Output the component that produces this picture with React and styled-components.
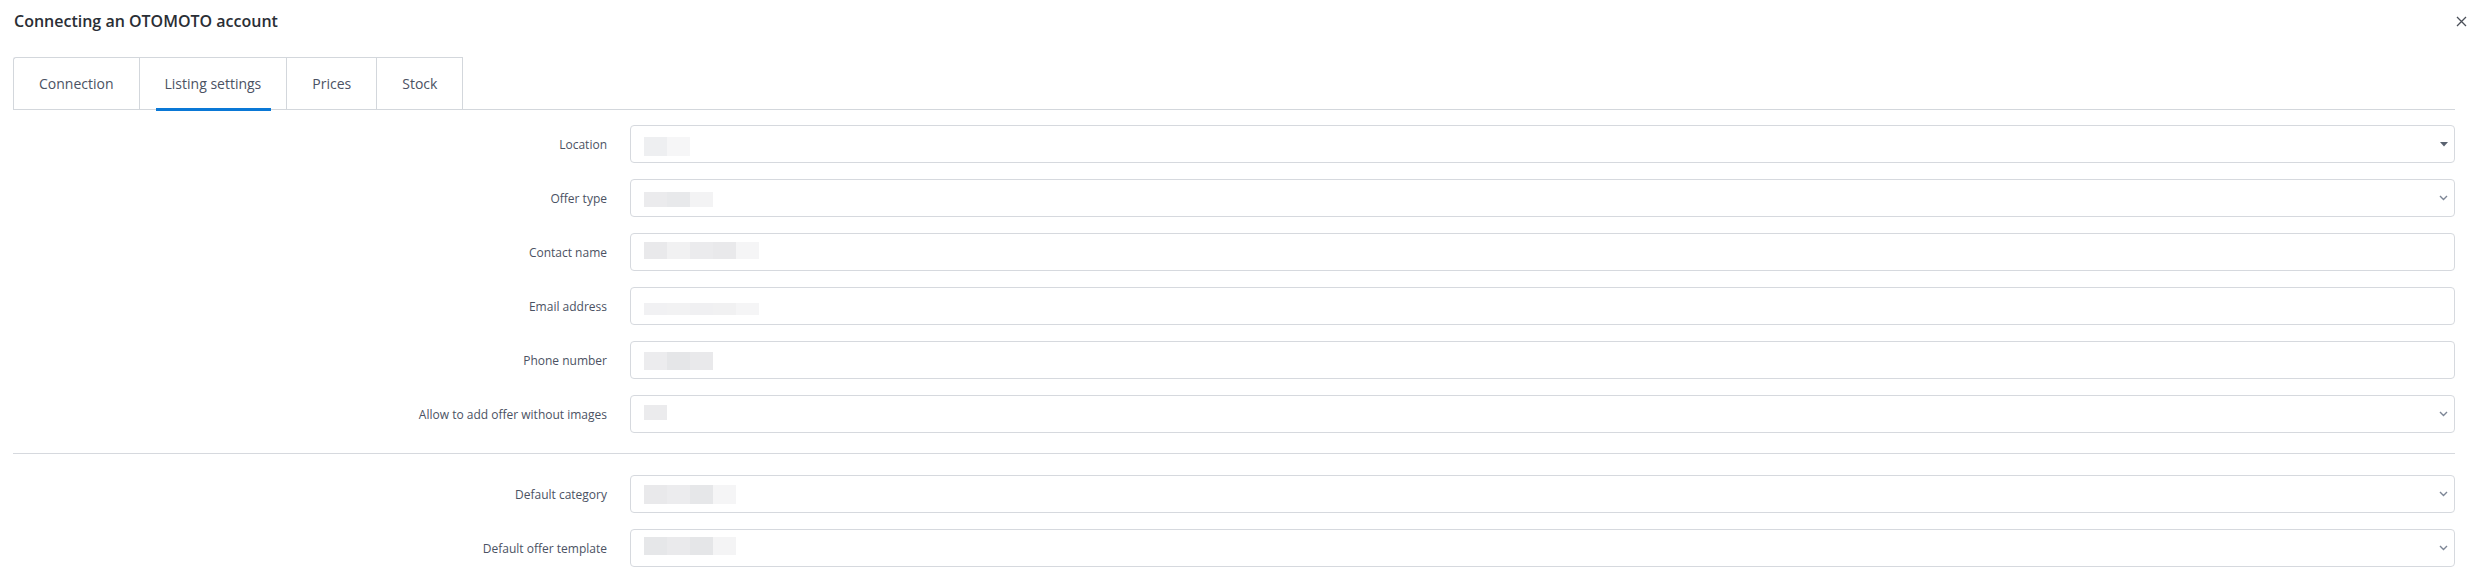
import React from 'react';
import styled, { createGlobalStyle } from 'styled-components';

const GlobalStyle = createGlobalStyle`
	body {
		margin: 0;
		background: #ffffff;
		font-family: 'Open Sans', 'Noto Sans', sans-serif;
	}
`;

const Page = styled.div`
	padding: 0 23px 0 13px;
`;

const Header = styled.div`
	display: flex;
	align-items: center;
	justify-content: space-between;
	height: 42px;
	margin-right: -13px;
	padding-left: 1px;
`;

const Title = styled.h2`
	margin: 0;
	font-size: 16px;
	font-weight: 600;
	color: #2a2e35;
`;

const Close = styled.button`
	display: flex;
	align-items: center;
	justify-content: center;
	width: 14px;
	height: 14px;
	padding: 0;
	border: none;
	background: none;
	cursor: pointer;
`;

const TabList = styled.div`
	display: flex;
	margin-top: 15px;
	border-bottom: 1px solid #d3d7dc;
`;

const Tab = styled.div`
	position: relative;
	display: flex;
	align-items: center;
	height: 51px;
	padding: 0 25px;
	border: 1px solid #d3d7dc;
	border-bottom: none;
	border-right: ${({ $last }) => ($last ? '1px solid #d3d7dc' : 'none')};
	border-top-left-radius: ${({ $first }) => ($first ? '3px' : '0')};
	font-size: 14px;
	color: #4b5263;
	cursor: pointer;
	&::after {
		content: '';
		display: ${({ $active }) => ($active ? 'block' : 'none')};
		position: absolute;
		left: 16px;
		right: 15px;
		bottom: -2px;
		height: 3px;
		background: #0a78d6;
	}
`;

const Form = styled.div`
	display: grid;
	grid-template-columns: 594px 1fr;
	column-gap: 23px;
	row-gap: 16px;
	margin-top: ${({ $top }) => $top}px;
`;

const Label = styled.div`
	display: flex;
	align-items: center;
	justify-content: flex-end;
	font-size: 12px;
	color: #4b5263;
`;

const Field = styled.div`
	display: flex;
	align-items: center;
	justify-content: space-between;
	height: 36px;
	padding: 0 6px 0 13px;
	border: 1px solid #d6d9de;
	border-radius: 4px;
	background: #fff;
`;

const Divider = styled.hr`
	margin: 20px 0 21px;
	border: none;
	border-top: 1px solid #d6d9de;
`;

// blurred placeholder values, drawn as pixel blocks
const Redacted = styled.div`
	display: flex;
	height: ${({ $h }) => $h}px;
	margin-top: ${({ $shift }) => $shift || 0}px;
`;

const Cell = styled.span`
	width: 23px;
	height: 100%;
	background: ${({ $shade }) => $shade};
`;

function Caret() {
	return (
		<svg width="8" height="5" viewBox="0 0 8 5">
			<path d="M0 0 H8 L4 4.5 Z" fill="#5a6270" />
		</svg>
	);
}

function Chevron() {
	return (
		<svg width="9" height="6" viewBox="0 0 9 6">
			<polyline points="1,1 4.5,4.5 8,1" fill="none" stroke="#7d8696" strokeWidth="1.4" />
		</svg>
	);
}

const tabs = ['Connection', 'Listing settings', 'Prices', 'Stock'];

const mainFields = [
	{ label: 'Location', icon: 'caret', cells: ['#eeeff1', '#f6f6f7'], h: 19, shift: 5 },
	{ label: 'Offer type', icon: 'chevron', cells: ['#ebebed', '#e8e9eb', '#f3f3f4'], h: 15, shift: 3 },
	{ label: 'Contact name', cells: ['#e9e9eb', '#f1f1f2', '#ebebed', '#e9e9eb', '#f5f5f6'], h: 17, shift: -4 },
	{ label: 'Email address', cells: ['#f1f1f3', '#f2f2f3', '#f0f0f2', '#f1f1f2', '#f5f5f6'], h: 12, shift: 5 },
	{ label: 'Phone number', cells: ['#ececee', '#e5e6e8', '#e9e9eb'], h: 18, shift: 1 },
	{ label: 'Allow to add offer without images', icon: 'chevron', cells: ['#ebebed'], h: 15, shift: -4 },
];

const extraFields = [
	{ label: 'Default category', icon: 'chevron', cells: ['#e9e9eb', '#ececee', '#e6e7e9', '#f5f5f6'], h: 19, shift: 0 },
	{ label: 'Default offer template', icon: 'chevron', cells: ['#e6e7e9', '#eaeaec', '#e5e6e8', '#f4f4f5'], h: 18, shift: -4 },
];

function Row({ label, icon, cells, h, shift }) {
	return (
		<>
			<Label>{label}</Label>
			<Field>
				<Redacted $h={h} $shift={shift}>
					{cells.map((shade, i) => (
						<Cell key={i} $shade={shade} />
					))}
				</Redacted>
				{icon === 'caret' && <Caret />}
				{icon === 'chevron' && <Chevron />}
			</Field>
		</>
	);
}

function App() {
	return (
		<Page>
			<GlobalStyle />
			<Header>
				<Title>Connecting an OTOMOTO account</Title>
				<Close aria-label="Close">
					<svg width="11" height="11" viewBox="0 0 11 11">
						<path d="M1 1 L10 10 M10 1 L1 10" stroke="#4a4f58" strokeWidth="1.3" />
					</svg>
				</Close>
			</Header>
			<TabList>
				{tabs.map((t, i) => (
					<Tab key={t} $first={i === 0} $last={i === tabs.length - 1} $active={i === 1}>
						{t}
					</Tab>
				))}
			</TabList>
			<Form $top={15}>
				{mainFields.map((f) => (
					<Row key={f.label} {...f} />
				))}
			</Form>
			<Divider />
			<Form $top={0}>
				{extraFields.map((f) => (
					<Row key={f.label} {...f} />
				))}
			</Form>
		</Page>
	);
}

export default App;
